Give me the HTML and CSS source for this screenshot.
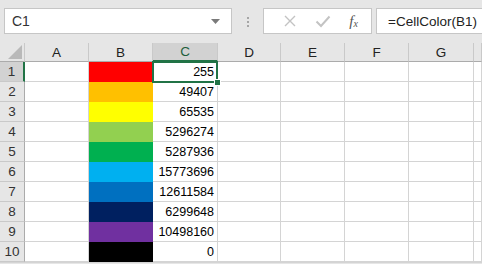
FILE: index.html
```html
<!DOCTYPE html>
<html>
<head>
  <title>CellColor</title>
  <meta name="viewport" content="width=device-width, initial-scale=1.0">
  <link rel="stylesheet" href="styles.css">
</head>
<body>
    <div class="formula-bar">
        <div class="name-box">
            <span>C1</span>
            <svg class="drop" width="9" height="5" viewBox="0 0 9 5"><path d="M0 0H9L4.5 5Z" fill="#7a7a7a"/></svg>
        </div>
        <div class="grip"><i></i><i></i><i></i></div>
        <div class="fx-buttons">
            <svg width="14" height="14" viewBox="0 0 14 14"><path d="M2 2L12 12M12 2L2 12" stroke="#c3c3c3" stroke-width="1.4" fill="none"/></svg>
            <svg width="16" height="14" viewBox="0 0 16 14"><path d="M1.5 7.5L6 12L14.5 2.5" stroke="#c3c3c3" stroke-width="2" fill="none"/></svg>
            <span class="fx">f<sub>x</sub></span>
        </div>
        <div class="formula-input">=CellColor(B1)</div>
    </div>

    <div class="sheet">
        <div class="corner"><svg width="14" height="14" viewBox="0 0 14 14"><path d="M14 0V14H0Z" fill="#b9b9b9"/></svg></div>
        <div class="col-head">A</div>
        <div class="col-head">B</div>
        <div class="col-head active">C</div>
        <div class="col-head">D</div>
        <div class="col-head">E</div>
        <div class="col-head">F</div>
        <div class="col-head">G</div>
        <div class="col-head"></div>

        <div class="row-head active">1</div>
        <div class="cell"></div><div class="cell fill" style="background:#ff0000"></div><div class="cell num selected">255</div>
        <div class="cell"></div><div class="cell"></div><div class="cell"></div><div class="cell"></div><div class="cell"></div>

        <div class="row-head">2</div>
        <div class="cell"></div><div class="cell fill" style="background:#ffc000"></div><div class="cell num">49407</div>
        <div class="cell"></div><div class="cell"></div><div class="cell"></div><div class="cell"></div><div class="cell"></div>

        <div class="row-head">3</div>
        <div class="cell"></div><div class="cell fill" style="background:#ffff00"></div><div class="cell num">65535</div>
        <div class="cell"></div><div class="cell"></div><div class="cell"></div><div class="cell"></div><div class="cell"></div>

        <div class="row-head">4</div>
        <div class="cell"></div><div class="cell fill" style="background:#92d050"></div><div class="cell num">5296274</div>
        <div class="cell"></div><div class="cell"></div><div class="cell"></div><div class="cell"></div><div class="cell"></div>

        <div class="row-head">5</div>
        <div class="cell"></div><div class="cell fill" style="background:#00b050"></div><div class="cell num">5287936</div>
        <div class="cell"></div><div class="cell"></div><div class="cell"></div><div class="cell"></div><div class="cell"></div>

        <div class="row-head">6</div>
        <div class="cell"></div><div class="cell fill" style="background:#00b0f0"></div><div class="cell num">15773696</div>
        <div class="cell"></div><div class="cell"></div><div class="cell"></div><div class="cell"></div><div class="cell"></div>

        <div class="row-head">7</div>
        <div class="cell"></div><div class="cell fill" style="background:#0070c0"></div><div class="cell num">12611584</div>
        <div class="cell"></div><div class="cell"></div><div class="cell"></div><div class="cell"></div><div class="cell"></div>

        <div class="row-head">8</div>
        <div class="cell"></div><div class="cell fill" style="background:#002060"></div><div class="cell num">6299648</div>
        <div class="cell"></div><div class="cell"></div><div class="cell"></div><div class="cell"></div><div class="cell"></div>

        <div class="row-head">9</div>
        <div class="cell"></div><div class="cell fill" style="background:#7030a0"></div><div class="cell num">10498160</div>
        <div class="cell"></div><div class="cell"></div><div class="cell"></div><div class="cell"></div><div class="cell"></div>

        <div class="row-head">10</div>
        <div class="cell"></div><div class="cell fill" style="background:#000000"></div><div class="cell num">0</div>
        <div class="cell"></div><div class="cell"></div><div class="cell"></div><div class="cell"></div><div class="cell"></div>
    </div>
</body>
</html>
```

FILE: styles.css
```css
body {
    margin: 0;
    font-family: "Liberation Sans", Arial, sans-serif;
    background: #e6e6e6;
    overflow: hidden;
}

.formula-bar {
    display: flex;
    align-items: center;
    height: 43px;
    padding-left: 4px;
    background: #e6e6e6;
}

.name-box {
    box-sizing: border-box;
    width: 228px;
    height: 26px;
    margin-top: -1px;
    background: white;
    border: 1px solid #c6c6c6;
    display: flex;
    align-items: center;
    justify-content: space-between;
    padding: 0 11px 0 7px;
    font-size: 14px;
    color: #333;
}

.grip {
    width: 31px;
    display: flex;
    flex-direction: column;
    align-items: center;
    gap: 2px;
}
.grip i {
    width: 2px;
    height: 2px;
    background: #a6a6a6;
}

.fx-buttons {
    box-sizing: border-box;
    width: 109px;
    height: 26px;
    margin-top: -1px;
    background: white;
    border: 1px solid #c6c6c6;
    display: flex;
    align-items: center;
    justify-content: space-around;
    padding: 0 4px 0 10px;
}
.fx {
    font-family: "Liberation Serif", serif;
    font-style: italic;
    font-size: 15px;
    color: #555;
}
.fx sub {
    font-size: 10px;
    vertical-align: -1px;
}

.formula-input {
    flex: 1;
    box-sizing: border-box;
    height: 26px;
    margin-top: -1px;
    margin-left: 4px;
    background: white;
    border: 1px solid #c6c6c6;
    border-right: none;
    padding-left: 11px;
    display: flex;
    align-items: center;
    font-size: 13.5px;
    color: #222;
}

.sheet {
    display: grid;
    grid-template-columns: 25px 64px 64px 65px 63px 64px 64px 65px 1fr;
    grid-template-rows: 19px repeat(10, 20px);
    background: white;
    font-size: 12.5px;
    border-bottom: 1px solid #d4d4d4;
}

.corner {
    background: #e6e6e6;
    border-right: 1px solid #c9c9c9;
    border-bottom: 1px solid #ababab;
    display: flex;
    align-items: flex-end;
    justify-content: flex-end;
    padding: 0 2px 2px 0;
}

.col-head {
    box-sizing: border-box;
    background: #e6e6e6;
    border-right: 1px solid #c9c9c9;
    border-bottom: 1px solid #ababab;
    display: flex;
    align-items: center;
    justify-content: center;
    font-size: 13.5px;
    color: #222;
}
.col-head.active {
    background: #d2d2d2;
    border-bottom: 2px solid #217346;
    color: #1d5e3b;
}

.row-head {
    box-sizing: border-box;
    background: #e6e6e6;
    border-right: 1px solid #ababab;
    border-bottom: 1px solid #c9c9c9;
    display: flex;
    align-items: center;
    justify-content: center;
    font-size: 13.5px;
    color: #333;
}
.row-head.active {
    background: #d2d2d2;
    border-right: 2px solid #217346;
}

.cell {
    box-sizing: border-box;
    border-right: 1px solid #d4d4d4;
    border-bottom: 1px solid #d4d4d4;
}
.cell.fill {
    border: none;
}

.num {
    display: flex;
    align-items: flex-end;
    justify-content: flex-end;
    padding: 0 3px 2px 0;
    color: #000;
}

.selected {
    position: relative;
}
.selected::before {
    content: "";
    position: absolute;
    left: -1px;
    top: -1px;
    right: -1px;
    bottom: -2px;
    border: 2px solid #217346;
}
.selected::after {
    content: "";
    position: absolute;
    right: -4px;
    bottom: -5px;
    width: 5px;
    height: 5px;
    background: #217346;
    border: 1px solid white;
}
```
